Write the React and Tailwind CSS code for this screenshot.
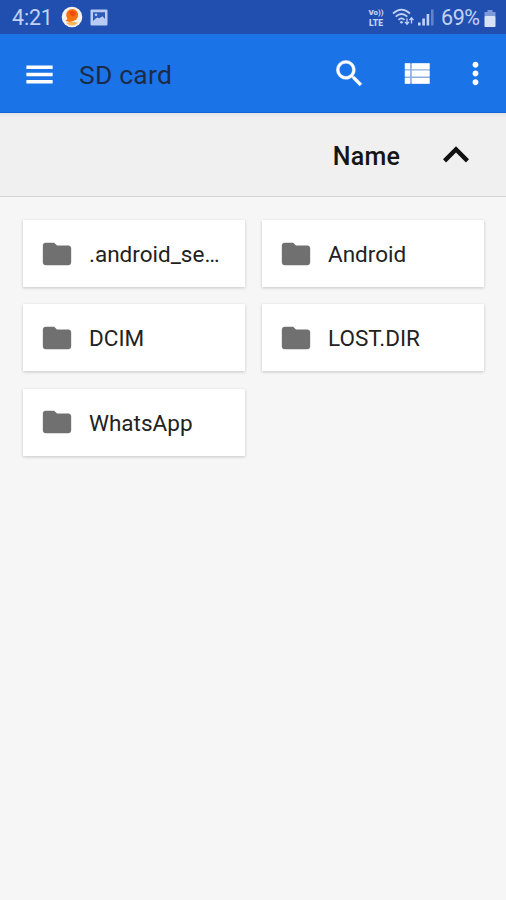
function Icon({ d, className }) {
  return (
    <svg viewBox="0 0 24 24" fill="currentColor" className={`shrink-0 ${className}`}>
      <path d={d} />
    </svg>
  );
}

const paths = {
  menu: 'M3 18.1h18v-2.4H3v2.4zm0-4.9h18v-2.4H3v2.4zM3 5.9v2.4h18V5.9H3z',
  search:
    'M15.5 14h-.79l-.28-.27A6.471 6.471 0 0 0 16 9.5 6.5 6.5 0 1 0 9.5 16c1.61 0 3.09-.59 4.23-1.57l.27.28v.79l5 4.99L20.49 19l-4.99-5zm-6 0C7.01 14 5 11.99 5 9.5S7.01 5 9.5 5 14 7.01 14 9.5 11.99 14 9.5 14z',
  more: 'M12 8c1.1 0 2-.9 2-2s-.9-2-2-2-2 .9-2 2 .9 2 2 2zm0 2c-1.1 0-2 .9-2 2s.9 2 2 2 2-.9 2-2-.9-2-2-2zm0 6c-1.1 0-2 .9-2 2s.9 2 2 2 2-.9 2-2-.9-2-2-2z',
  up: 'M12 8l-6 6 1.41 1.41L12 10.83l4.59 4.58L18 14z',
  folder:
    'M10 4H4c-1.1 0-1.99.9-1.99 2L2 18c0 1.1.9 2 2 2h16c1.1 0 2-.9 2-2V8c0-1.1-.9-2-2-2h-8l-2-2z',
};

function StatusBar() {
  return (
    <div className="flex h-[34px] items-center bg-[#214fb0] pl-[12px] pr-[10px] text-[#c3d2f4]">
      <span className="w-[49px] pt-[2px] text-[21.5px] leading-[34px] tracking-[-0.2px]">4:21</span>
      <svg viewBox="0 0 22 22" className="h-[22px] w-[22px]">
        <circle cx="11" cy="11" r="10.3" fill="#f4f1f3" />
        <path d="M5 17Q11 14 17 17Q11 22 5 17Z" fill="#f7b65e" />
        <circle cx="11.2" cy="9" r="6" fill="#f5730f" />
        <path d="M8 6Q11 3.5 14.5 6Q15.5 10 11.5 10.5Q8.5 9 8 6Z" fill="#ee4d12" />
        <path d="M4.5 15L8 11L13 14.5L9 16Z" fill="#f5730f" />
      </svg>
      <svg viewBox="0 0 18 17" className="ml-[7px] mt-px h-[17px] w-[18px]">
        <rect x="0.5" y="0.5" width="17" height="16" rx="1" fill="#b9cbf3" />
        <path d="M3 3.2H15V10L12.5 7.3L9.3 9.3L7 8.5L3 12Z" fill="#2f5ab6" />
        <circle cx="6" cy="5.8" r="1.3" fill="#b9cbf3" />
      </svg>
      <div className="flex-1" />
      <div className="flex w-[18px] flex-col items-center pt-[2px] text-[8px] font-black leading-[10px]">
        <span className="whitespace-nowrap">Vo))</span>
        <span className="text-[8.5px]">LTE</span>
      </div>
      <svg viewBox="0 0 24 18" className="ml-[7px] h-[18px] w-[24px]" fill="none" stroke="#c3d2f4">
        <path d="M1 5.5Q9.5 -2.2 18 5.5M3.7 8.7Q9.5 3.3 15.3 8.7M6.5 11.8Q9.5 9 12.5 11.8" strokeWidth="1.7" />
        <circle cx="9.5" cy="14.2" r="1.3" fill="#c3d2f4" stroke="none" />
        <path d="M15 10.5V16M13 13.9L15 16.2L17 13.9M19.5 15.5V10M17.5 12.1L19.5 9.8L21.5 12.1" strokeWidth="1.3" />
      </svg>
      <svg viewBox="0 0 16 17" className="ml-[2px] h-[17px] w-[16px]" fill="#c3d2f4">
        <rect x="0" y="13.5" width="2.6" height="3" />
        <rect x="4.3" y="9.5" width="2.6" height="7" />
        <rect x="8.6" y="5" width="2.6" height="11.5" />
        <rect x="13" y="0.5" width="2.6" height="16" opacity="0.4" />
      </svg>
      <span className="ml-[7px] w-[39px] whitespace-nowrap pt-[2px] text-[21.5px] leading-[34px] tracking-[-0.4px]">69%</span>
      <svg viewBox="0 0 12 17" className="ml-[4px] mt-[2px] h-[17px] w-[12px]">
        <path d="M3.5 0H8.5V2H11.5V6H0.5V2H3.5Z" fill="#7f9ad8" />
        <rect x="0.5" y="6" width="11" height="11" rx="0.8" fill="#d7e1f8" />
      </svg>
    </div>
  );
}

function Toolbar() {
  return (
    <header className="flex h-[79px] items-center border-b border-[#1466d8] bg-[#1b73e8] pl-[22px] pr-[13px] text-white">
      <Icon d={paths.menu} className="mt-[2px] h-[35px] w-[35px]" />
      <h1 className="ml-[22px] flex-1 pt-[4px] text-[26.5px] font-normal tracking-[0.2px] text-[#1c2c48]">SD card</h1>
      <Icon d={paths.search} className="h-[35px] w-[35px] stroke-white stroke-[0.3]" />
      <svg viewBox="0 0 24 24" className="ml-[32px] mt-px h-[35px] w-[35px]">
        <path d="M4 5h17v14H4z" fill="#8eaee2" />
        <path
          d="M4 5h3.6v4H4zM8.8 5H21v4H8.8zM4 10h3.6v4H4zM8.8 10H21v4H8.8zM4 15h3.6v4H4zM8.8 15H21v4H8.8z"
          fill="#fff"
        />
      </svg>
      <Icon d={paths.more} className="ml-[24px] h-[35px] w-[35px]" />
    </header>
  );
}

function FolderCard({ name }) {
  return (
    <div className="flex h-[67px] items-center bg-white pl-[17px] pr-[20px] shadow-[0_1px_3px_rgba(0,0,0,0.2)]">
      <Icon d={paths.folder} className="h-[34px] w-[34px] text-[#707070]" />
      <span className="ml-[15px] whitespace-nowrap pt-[3px] text-[22.5px] text-[#222]">{name}</span>
    </div>
  );
}

const folders = ['.android_se…', 'Android', 'DCIM', 'LOST.DIR', 'WhatsApp'];

export default function App() {
  return (
    <div className="flex h-[900px] w-[506px] flex-col overflow-hidden bg-[#f6f6f6] font-[Roboto,sans-serif]">
      <StatusBar />
      <Toolbar />
      <div className="flex h-[84px] items-center justify-end border-b border-[#d3d3d3] bg-[linear-gradient(#e4e4e6,#f0f0f0_5px)] pr-[24px]">
        <span className="pt-[4px] text-[25px] font-medium tracking-[0.2px] text-[#151515]">Name</span>
        <Icon d={paths.up} className="ml-[30px] mt-px h-[52px] w-[52px] text-[#111]" />
      </div>
      <main className="grid grid-cols-2 gap-x-[17px] gap-y-[17.3px] pl-[23px] pr-[22px] pt-[23px]">
        {folders.map((name) => (
          <FolderCard key={name} name={name} />
        ))}
      </main>
    </div>
  );
}
